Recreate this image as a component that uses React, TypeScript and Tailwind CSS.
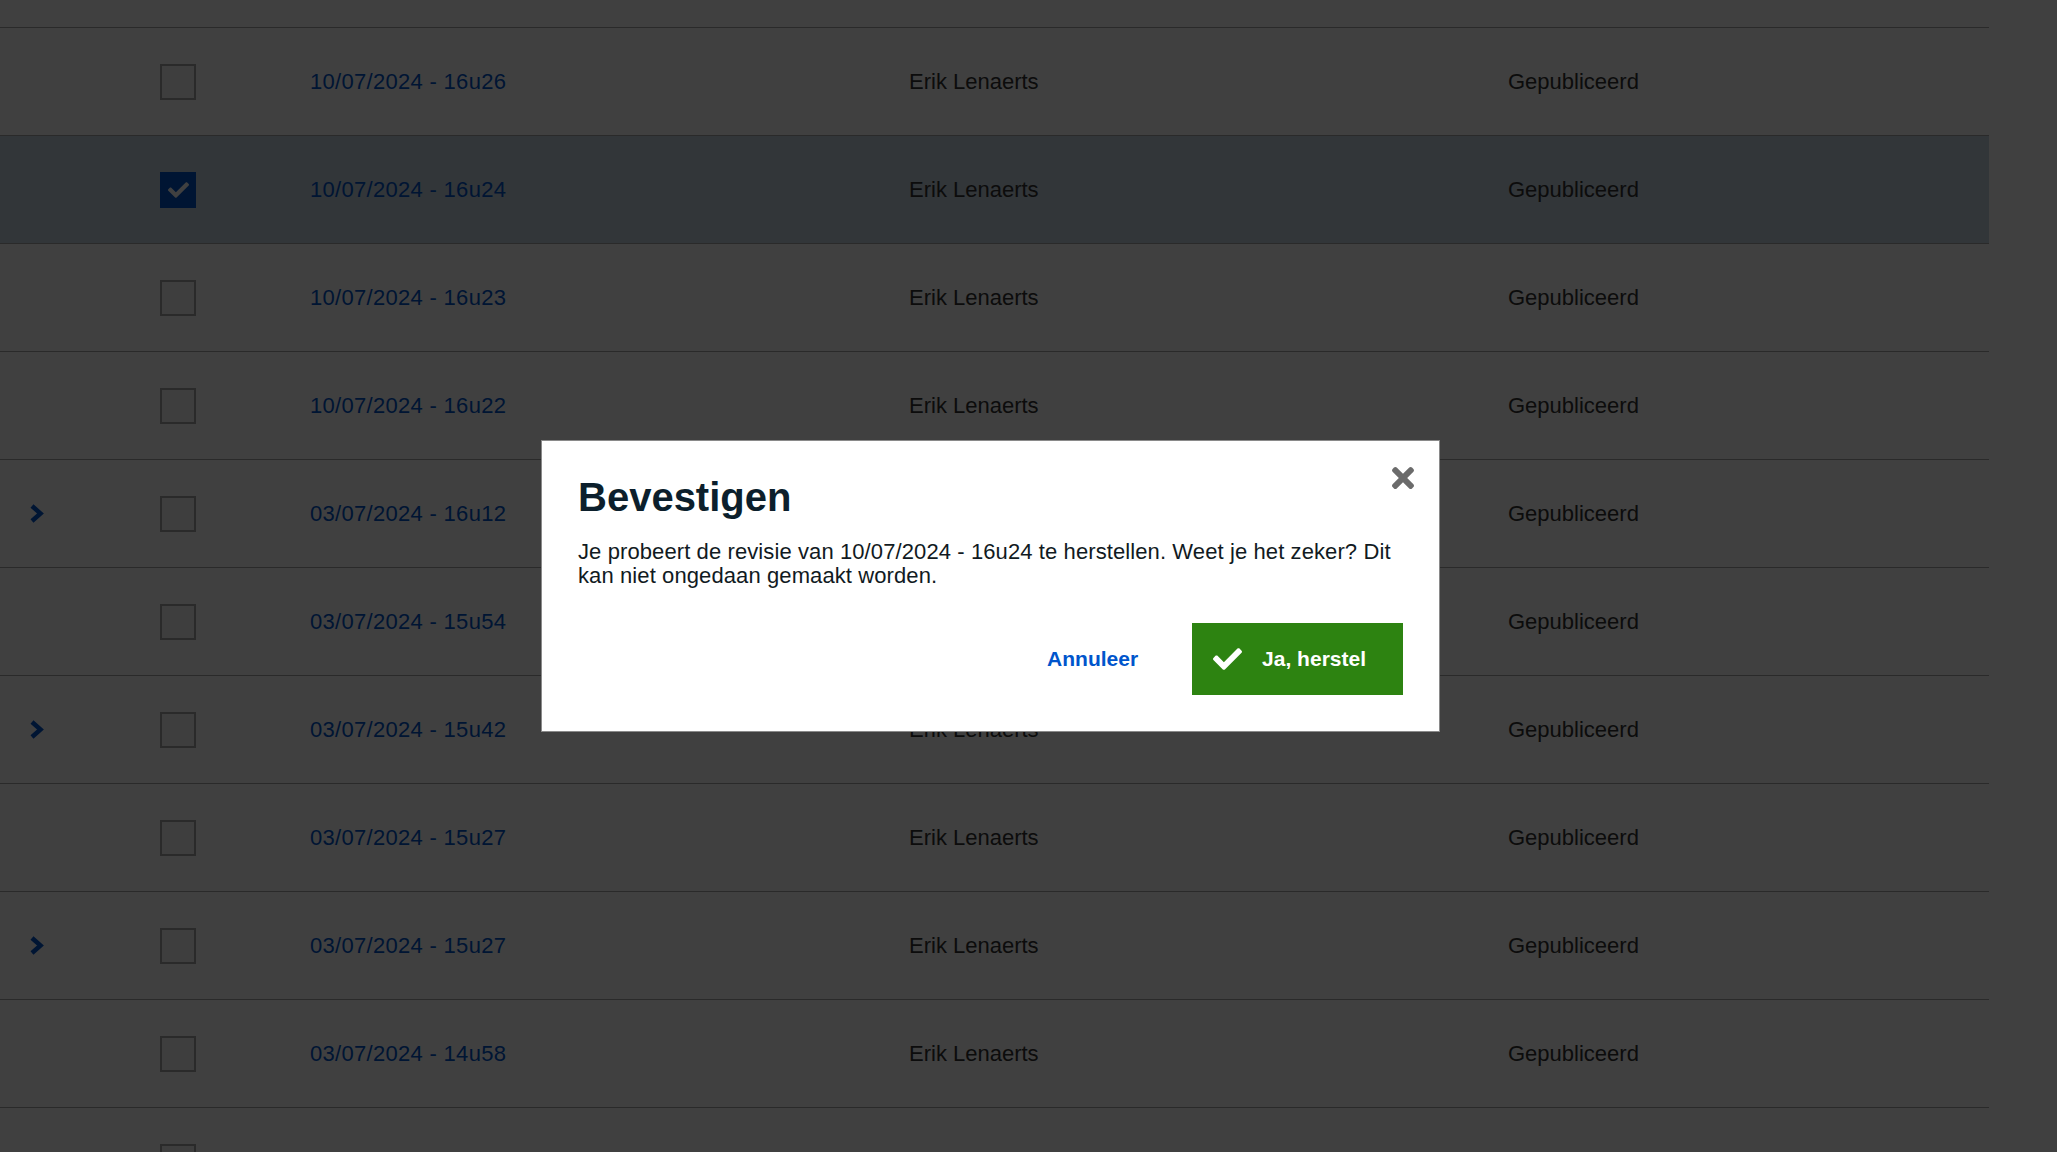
import React from "react";

type Row = { date?: string; chevron?: boolean; checked?: boolean };

const rows: Row[] = [
  { date: "10/07/2024 - 16u26" },
  { date: "10/07/2024 - 16u24", checked: true },
  { date: "10/07/2024 - 16u23" },
  { date: "10/07/2024 - 16u22" },
  { date: "03/07/2024 - 16u12", chevron: true },
  { date: "03/07/2024 - 15u54" },
  { date: "03/07/2024 - 15u42", chevron: true },
  { date: "03/07/2024 - 15u27" },
  { date: "03/07/2024 - 15u27", chevron: true },
  { date: "03/07/2024 - 14u58" },
  { chevron: true },
];

function Chevron() {
  return (
    <svg width="15" height="21" viewBox="0 0 15 21" aria-hidden="true">
      <path d="M3 3 L11.5 10.5 L3 18" fill="none" stroke="#0055cc" strokeWidth="4.5" strokeLinejoin="miter" />
    </svg>
  );
}

function CheckIcon({ w, h, color }: { w: number; h: number; color: string }) {
  return (
    <svg width={w} height={h} viewBox="0 64 512 384" aria-hidden="true">
      <path
        fill={color}
        d="M173.898 439.404l-166.4-166.4c-9.997-9.997-9.997-26.206 0-36.204l36.203-36.204c9.997-9.998 26.207-9.998 36.204 0L192 312.69 432.095 72.596c9.997-9.997 26.207-9.997 36.204 0l36.203 36.204c9.997 9.997 9.997 26.206 0 36.204l-294.4 294.401c-9.998 9.997-26.207 9.997-36.204-.001z"
      />
    </svg>
  );
}

function CloseIcon() {
  return (
    <svg width="22" height="22" viewBox="0 80 352 352" aria-hidden="true">
      <path
        fill="#6b6b6b"
        d="M242.72 256l100.07-100.07c12.28-12.28 12.28-32.19 0-44.48l-22.24-22.24c-12.28-12.28-32.19-12.28-44.48 0L176 189.28 75.93 89.21c-12.28-12.28-32.19-12.28-44.48 0L9.21 111.45c-12.28 12.28-12.28 32.19 0 44.48L109.28 256 9.21 356.07c-12.28 12.28-12.28 32.19 0 44.48l22.24 22.24c12.28 12.28 32.2 12.28 44.48 0L176 322.72l100.07 100.07c12.28 12.28 32.2 12.28 44.48 0l22.24-22.24c12.28-12.28 12.28-32.19 0-44.48L242.72 256z"
      />
    </svg>
  );
}

function TableRow({ row }: { row: Row }) {
  return (
    <div
      className={
        row.checked
          ? "flex h-[108px] items-center border-b border-[#a9a9a9] bg-[#c6d5e2]"
          : "flex h-[108px] items-center border-b border-[#a9a9a9] bg-white"
      }
    >
      <div className="flex w-[160px] items-center pl-[29px]">{row.chevron ? <Chevron /> : null}</div>
      <div className="w-[150px]">
        {row.checked ? (
          <div className="flex h-[36px] w-[36px] items-center justify-center bg-[#0055cc]">
            <CheckIcon w={21} h={16} color="#ffffff" />
          </div>
        ) : (
          <div className="h-[36px] w-[36px] border-2 border-[#a8a8a8] bg-[#f6f6f6]" />
        )}
      </div>
      {row.date ? (
        <>
          <div className="w-[599px] text-[22px] tracking-[0.3px] text-[#0055cc]">{row.date}</div>
          <div className="w-[599px] text-[22px] text-[#333332]">Erik Lenaerts</div>
          <div className="flex-1 text-[22px] text-[#333332]">Gepubliceerd</div>
        </>
      ) : null}
    </div>
  );
}

export default function App() {
  return (
    <div className="relative h-[1152px] w-full overflow-hidden bg-white font-['Liberation_Sans',Arial,sans-serif]">
      <div className="w-[1989px]">
        <div className="h-[28px] border-b border-[#a9a9a9]" />
        {rows.map((r, i) => (
          <TableRow key={i} row={r} />
        ))}
      </div>

      <div className="fixed inset-0 bg-black/75" />

      <div
        role="dialog"
        className="absolute left-[541px] top-[440px] w-[899px] border border-[#8a8a8a] bg-white p-[36px]"
      >
        <button className="absolute right-[25px] top-[26px] flex h-[22px] w-[22px] items-center justify-center">
          <CloseIcon />
        </button>
        <h2 className="text-[40px] font-bold leading-[40px] text-[#0c1f2c]">Bevestigen</h2>
        <p className="mt-[23px] text-[22px] leading-[24px] tracking-[0.1px] text-[#111a22]">
          Je probeert de revisie van 10/07/2024 - 16u24 te herstellen. Weet je het zeker? Dit kan niet ongedaan gemaakt
          worden.
        </p>
        <div className="mt-[35px] flex items-center justify-end gap-[54px]">
          <button className="text-[21px] font-bold text-[#0055cc]">Annuleer</button>
          <button className="flex h-[72px] items-center gap-[20px] bg-[#2d8311] pl-[21px] pr-[37px] text-[21px] font-bold text-white">
            <CheckIcon w={29} h={22} color="#ffffff" />
            <span>Ja, herstel</span>
          </button>
        </div>
      </div>
    </div>
  );
}
